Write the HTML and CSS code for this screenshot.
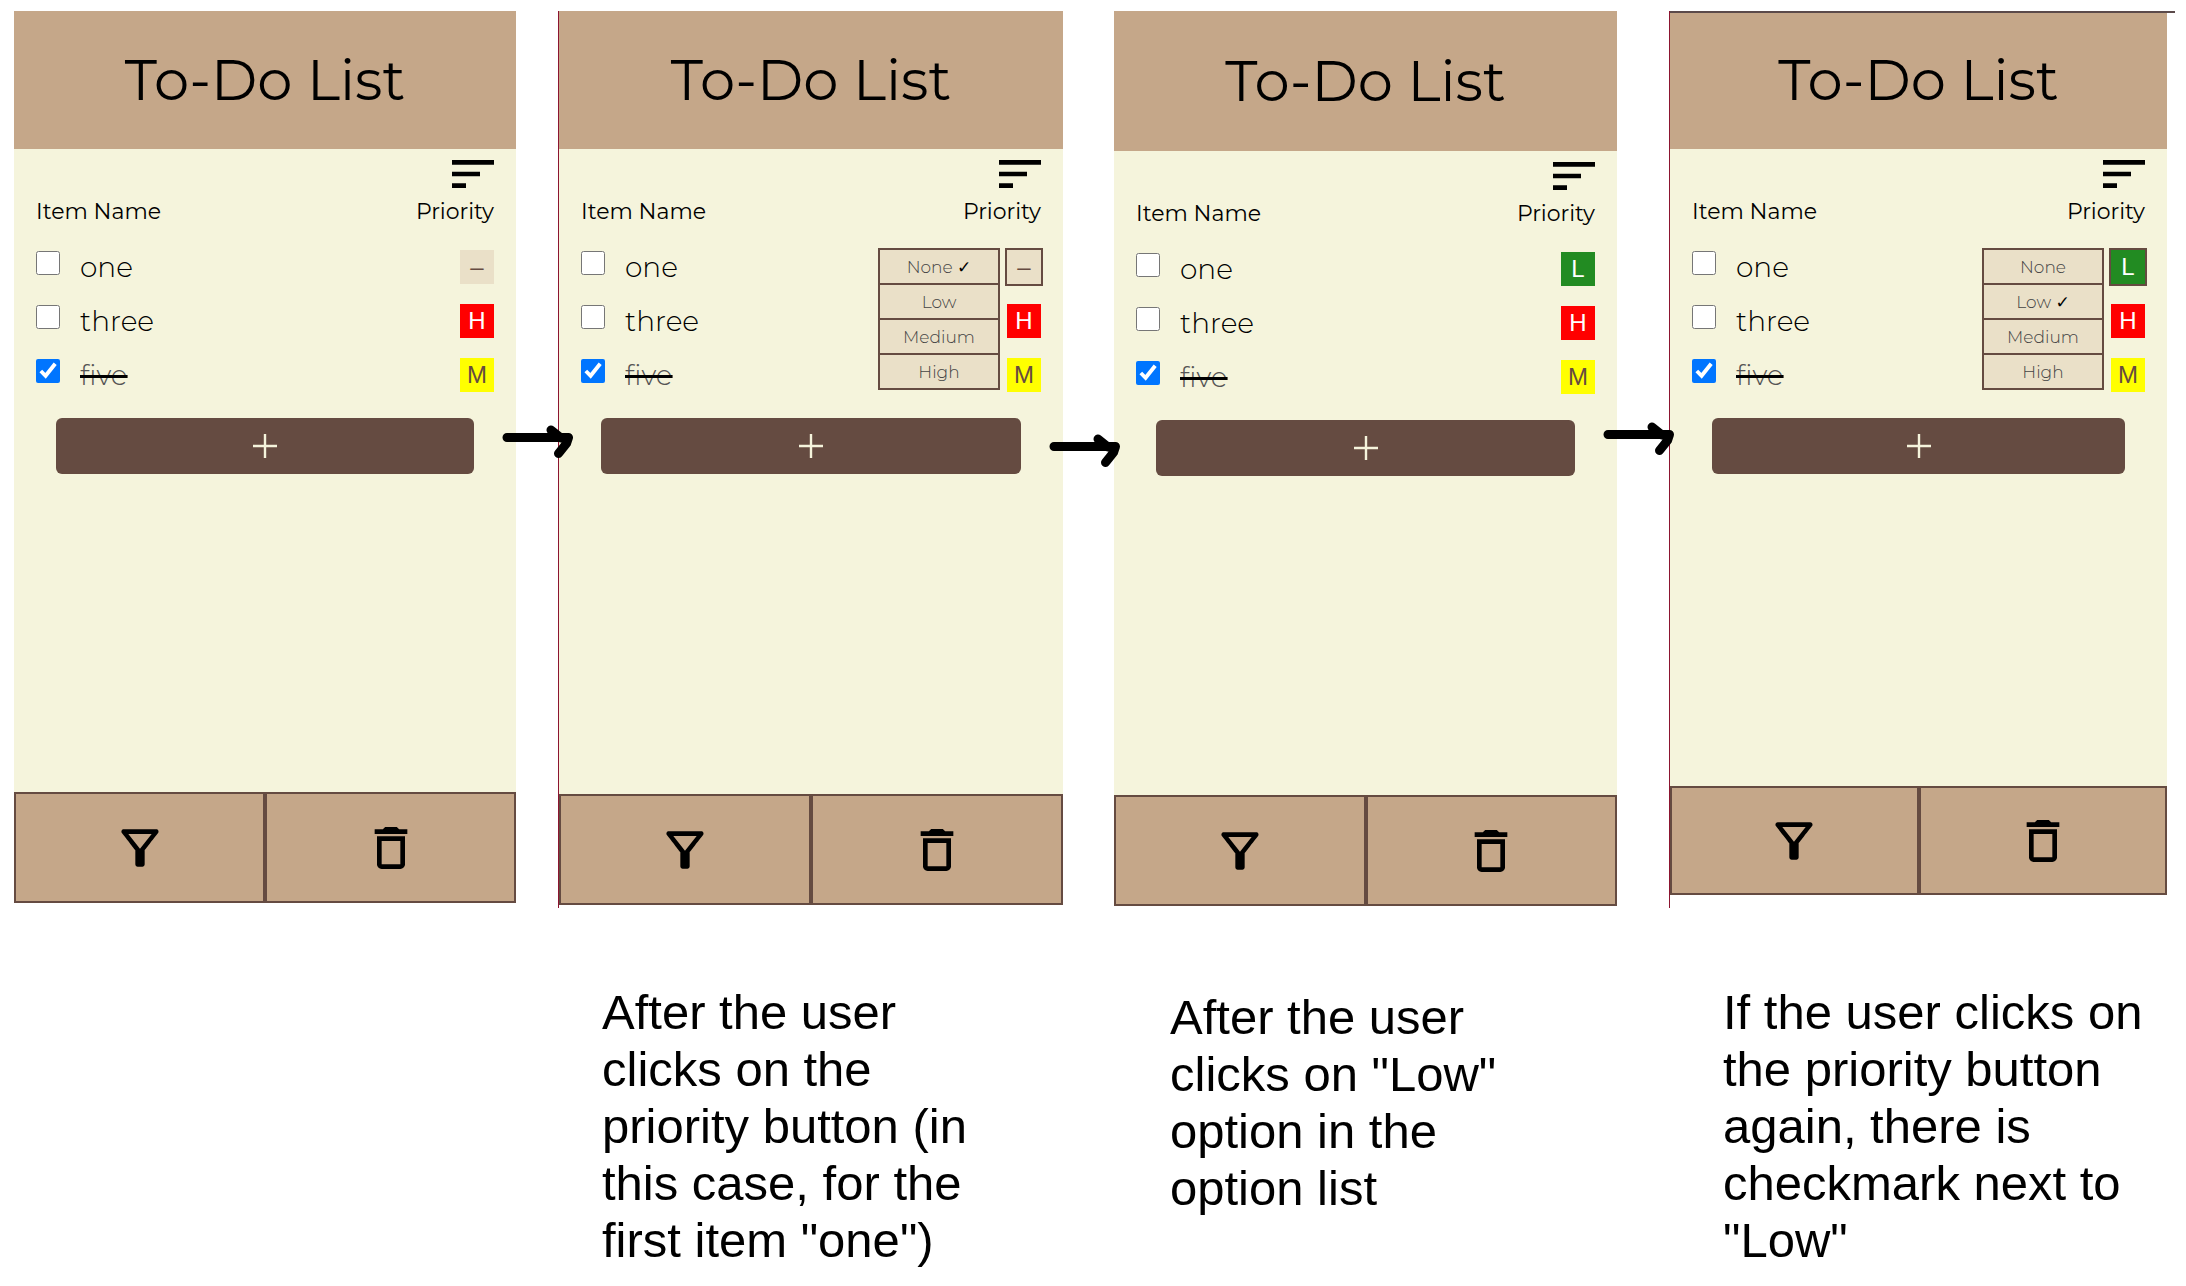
FILE: index.html
```html
<!DOCTYPE html>
<html lang="en">
<head>
<meta charset="utf-8">
<meta name="viewport" content="width=device-width, initial-scale=1">
<title>To-Do List: choosing a priority</title>
<link rel="stylesheet" href="styles.css">
</head>
<body>
<svg class="symbols" aria-hidden="true">
  <symbol id="sort" viewBox="3 6 18 12"><path d="M3 18h6v-2H3v2zM3 6v2h18V6H3zm0 7h12v-2H3v2z"/></symbol>
  <symbol id="filter" viewBox="0 0 24 24"><path d="M7 6h10l-5.01 6.3L7 6zM4.25 5.61C6.27 8.2 10 13 10 13v6c0 .55.45 1 1 1h2c.55 0 1-.45 1-1v-6s3.72-4.8 5.74-7.39C20.25 4.95 19.78 4 18.95 4H5.04C4.21 4 3.74 4.95 4.25 5.61z"/></symbol>
  <symbol id="trash" viewBox="0 0 24 24"><path d="M6 19c0 1.1.9 2 2 2h8c1.1 0 2-.9 2-2V7H6v12zM8 9h8v10H8V9zm7.5-5-1-1h-5l-1 1H5v2h14V4z"/></symbol>
  <symbol id="plus" viewBox="0 0 24 24"><path d="M10.8 0h2.4v10.8H24v2.4H13.2V24h-2.4V13.2H0v-2.4h10.8z"/></symbol>
  <symbol id="arrow" viewBox="0 0 80 40"><path d="M8 17.500H69.500M52 10l10 8M69.500 17.500l-2 6-8 10" fill="none" stroke="#000" stroke-width="9" stroke-linecap="round" stroke-linejoin="round"/></symbol>
</svg>

<main class="storyboard">
  <section class="stage">
    <div class="frame">
      <div class="app">
        <header class="app-header"><h1>To-Do List</h1></header>
        <div class="app-body">
          <button class="sort" aria-label="Sort"><svg><use href="#sort"/></svg></button>
          <div class="labels"><span>Item Name</span><span>Priority</span></div>
          <ul class="items">
            <li class="item"><label><input type="checkbox"><span>one</span></label><div class="priority"><button class="badge">–</button></div></li>
            <li class="item"><label><input type="checkbox"><span>three</span></label><div class="priority"><button class="badge high">H</button></div></li>
            <li class="item"><label><input type="checkbox" checked><span>five</span></label><div class="priority"><button class="badge medium">M</button></div></li>
          </ul>
          <button class="add" aria-label="Add item"><svg><use href="#plus"/></svg></button>
        </div>
        <footer class="actions">
          <button aria-label="Filter"><svg><use href="#filter"/></svg></button>
          <button aria-label="Delete"><svg><use href="#trash"/></svg></button>
        </footer>
      </div>
    </div>
  </section>

  <div class="step"><svg><use href="#arrow"/></svg></div>

  <section class="stage opened">
    <div class="frame ruled">
      <div class="app">
        <header class="app-header"><h1>To-Do List</h1></header>
        <div class="app-body">
          <button class="sort" aria-label="Sort"><svg><use href="#sort"/></svg></button>
          <div class="labels"><span>Item Name</span><span>Priority</span></div>
          <ul class="items">
            <li class="item"><label><input type="checkbox"><span>one</span></label><div class="priority"><button class="badge active" aria-expanded="true">–</button>
              <div class="menu"><button>None <b>✓</b></button><button>Low</button><button>Medium</button><button>High</button></div></div></li>
            <li class="item"><label><input type="checkbox"><span>three</span></label><div class="priority"><button class="badge high">H</button></div></li>
            <li class="item"><label><input type="checkbox" checked><span>five</span></label><div class="priority"><button class="badge medium">M</button></div></li>
          </ul>
          <button class="add" aria-label="Add item"><svg><use href="#plus"/></svg></button>
        </div>
        <footer class="actions">
          <button aria-label="Filter"><svg><use href="#filter"/></svg></button>
          <button aria-label="Delete"><svg><use href="#trash"/></svg></button>
        </footer>
      </div>
    </div>
    <p class="caption">After the user clicks on the priority button (in this case, for the first item "one")</p>
  </section>

  <div class="step low"><svg><use href="#arrow"/></svg></div>

  <section class="stage chosen">
    <div class="frame">
      <div class="app">
        <header class="app-header"><h1>To-Do List</h1></header>
        <div class="app-body">
          <button class="sort" aria-label="Sort"><svg><use href="#sort"/></svg></button>
          <div class="labels"><span>Item Name</span><span>Priority</span></div>
          <ul class="items">
            <li class="item"><label><input type="checkbox"><span>one</span></label><div class="priority"><button class="badge low">L</button></div></li>
            <li class="item"><label><input type="checkbox"><span>three</span></label><div class="priority"><button class="badge high">H</button></div></li>
            <li class="item"><label><input type="checkbox" checked><span>five</span></label><div class="priority"><button class="badge medium">M</button></div></li>
          </ul>
          <button class="add" aria-label="Add item"><svg><use href="#plus"/></svg></button>
        </div>
        <footer class="actions">
          <button aria-label="Filter"><svg><use href="#filter"/></svg></button>
          <button aria-label="Delete"><svg><use href="#trash"/></svg></button>
        </footer>
      </div>
    </div>
    <p class="caption">After the user clicks on "Low" option in the option list</p>
  </section>

  <div class="step high"><svg><use href="#arrow"/></svg></div>

  <section class="stage reopened">
    <div class="frame ruled">
      <div class="app">
        <header class="app-header"><h1>To-Do List</h1></header>
        <div class="app-body">
          <button class="sort" aria-label="Sort"><svg><use href="#sort"/></svg></button>
          <div class="labels"><span>Item Name</span><span>Priority</span></div>
          <ul class="items">
            <li class="item"><label><input type="checkbox"><span>one</span></label><div class="priority"><button class="badge low active" aria-expanded="true">L</button>
              <div class="menu"><button>None</button><button>Low <b>✓</b></button><button>Medium</button><button>High</button></div></div></li>
            <li class="item"><label><input type="checkbox"><span>three</span></label><div class="priority"><button class="badge high">H</button></div></li>
            <li class="item"><label><input type="checkbox" checked><span>five</span></label><div class="priority"><button class="badge medium">M</button></div></li>
          </ul>
          <button class="add" aria-label="Add item"><svg><use href="#plus"/></svg></button>
        </div>
        <footer class="actions">
          <button aria-label="Filter"><svg><use href="#filter"/></svg></button>
          <button aria-label="Delete"><svg><use href="#trash"/></svg></button>
        </footer>
      </div>
    </div>
    <p class="caption">If the user clicks on the priority button again, there is checkmark next to "Low"</p>
  </section>
</main>
</body>
</html>
```

FILE: styles.css
```css
:root {
  --tan: #c5a789;
  --cream: #f5f4dc;
  --sand: #eae0c8;
  --brown: #654b41;
}

* {
  box-sizing: border-box;
}

body {
  margin: 0;
  background: #fff;
  color: #000;
  font-family: Montserrat, Inter, sans-serif;
}

button {
  border: 0;
  padding: 0;
  font: inherit;
  color: inherit;
  cursor: pointer;
}

svg {
  display: block;
}

.symbols {
  display: none;
}

.storyboard {
  display: grid;
  grid-template-columns: 502fr 42fr 505fr 51fr 503fr 52fr 498fr;
  padding: 11px 19px 0 14px;
}

.stage {
  min-width: 0;
}

.frame {
  min-height: 897px;
}

.frame.ruled {
  border-left: 1px solid #8c1430;
}

.app {
  display: flex;
  flex-direction: column;
  min-height: 892px;
}

.opened .app {
  min-height: 894px;
}

.chosen .app {
  min-height: 895px;
}

.reopened .app {
  position: relative;
  min-height: 884px;
}

/* Stray rule that runs past the right edge of the last screen */
.reopened .app::before {
  content: "";
  position: absolute;
  top: 0;
  left: 0;
  right: -8px;
  height: 2px;
  background: #5b4a4a;
}

/* Screen */

.app-header {
  display: flex;
  align-items: center;
  justify-content: center;
  height: 138px;
  background: var(--tan);
}

.chosen .app-header {
  height: 140px;
}

.app-header h1 {
  margin: 0;
  font-size: 56px;
  font-weight: 400;
}

.app-body {
  display: flex;
  flex: 1;
  flex-direction: column;
  padding: 11px 22px;
  background: var(--cream);
}

.sort {
  align-self: flex-end;
  background: none;
}

.sort svg {
  width: 42px;
  height: 28px;
}

.labels {
  display: flex;
  justify-content: space-between;
  margin: 9px 0 23px;
  font-size: 22px;
  line-height: 30px;
}

.items {
  display: flex;
  flex-direction: column;
  gap: 20px;
  margin: 0;
  padding: 0;
  list-style: none;
}

.item {
  display: flex;
  justify-content: space-between;
  height: 34px;
}

.item label {
  display: flex;
  gap: 20px;
  font-size: 28px;
  font-weight: 300;
  line-height: 34px;
}

.item input {
  width: 24px;
  height: 24px;
  margin: 1px 0 0;
  accent-color: #0075ff;
}

.item input:checked + span {
  color: #555;
  text-decoration: line-through 3px #000;
}

.priority {
  position: relative;
}

.badge {
  display: block;
  width: 34px;
  height: 34px;
  background: var(--sand);
  color: var(--brown);
  font-family: "Liberation Sans", sans-serif;
  font-size: 24px;
  line-height: 34px;
}

.badge.low {
  background: #228b22;
  color: #fff;
}

.badge.medium {
  background: #ff0;
}

.badge.high {
  background: #f00;
  color: #fff;
}

.badge.active {
  outline: 2px solid var(--brown);
}

.menu {
  position: absolute;
  top: -2px;
  right: 41px;
  z-index: 1;
  display: grid;
  gap: 2px;
  width: 122px;
  padding: 2px;
  background: var(--brown);
}

.menu button {
  height: 33px;
  background: var(--sand);
  color: #444;
  font-size: 17px;
  font-weight: 300;
}

.menu b {
  color: #000;
  font-family: "DejaVu Sans", sans-serif;
}

.add {
  display: grid;
  place-items: center;
  height: 56px;
  margin: 26px 20px 0;
  border-radius: 6px;
  background: var(--brown);
  color: var(--cream);
}

.add svg {
  width: 24px;
  height: 24px;
  fill: currentColor;
}

.actions {
  display: grid;
  grid-template-columns: 1fr 1fr;
}

.actions button {
  display: grid;
  place-items: center;
  height: 111px;
  border: 2px solid var(--brown);
  background: var(--tan);
}

.reopened .actions button {
  height: 109px;
}

.actions svg {
  width: 56px;
  height: 56px;
}

/* Between and below the screens */

.step {
  position: relative;
}

.step svg {
  position: absolute;
  top: 409px;
  left: -17px;
  z-index: 2;
  width: 80px;
  height: 40px;
}

.step.low svg {
  top: 418px;
}

.step.high svg {
  top: 406px;
}

.caption {
  max-width: 440px;
  margin: 76px 0 0 44px;
  font-family: "Liberation Sans", Arial, sans-serif;
  font-size: 49px;
  line-height: 57px;
}

.opened .caption {
  max-width: 390px;
}

.chosen .caption {
  max-width: 390px;
  margin: 81px 0 0 56px;
}

.reopened .caption {
  margin-left: 54px;
}
```
